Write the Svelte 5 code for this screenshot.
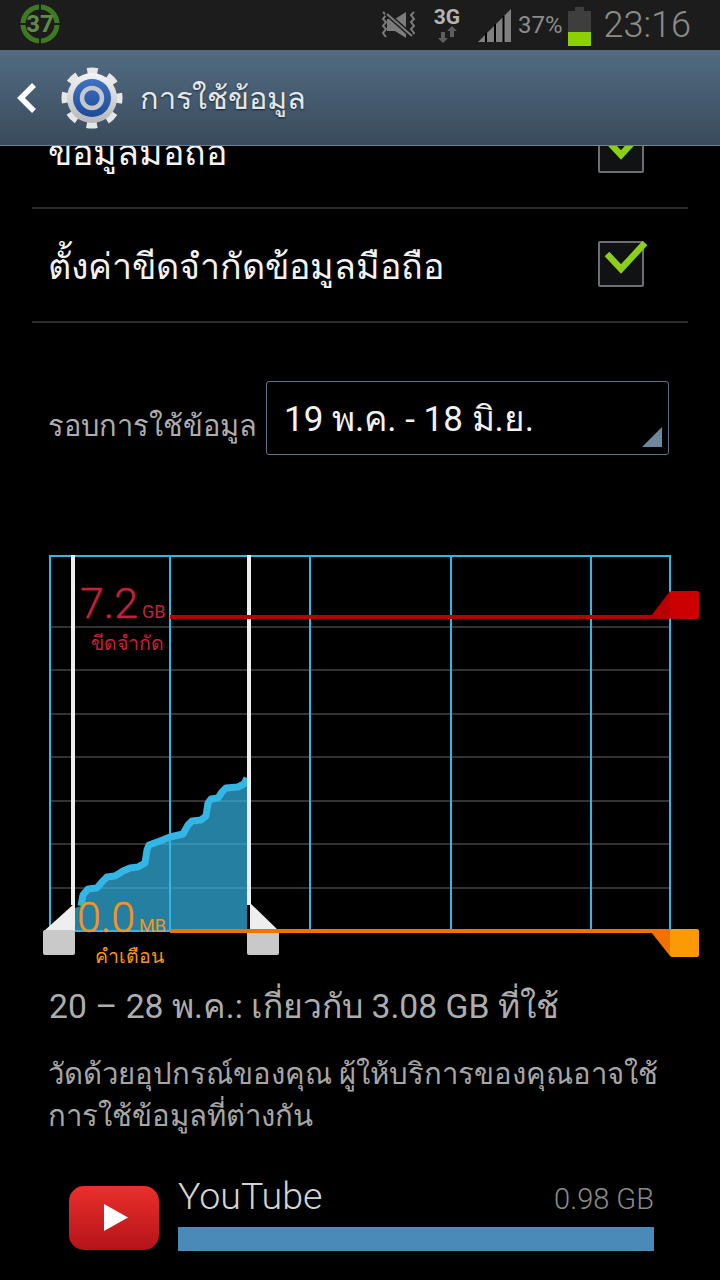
<script>
  const vLines = [50, 170, 310, 451, 591, 670];
  const hLines = [627, 670, 714, 757, 801, 844, 888];
  // usage curve, traced off the chart
  const curve = [[81,906],[83,895],[88,889],[97,888],[102,882],[107,877],[115,876],[123,871],[130,868],[138,867],[145,863],[147,850],[149,845],[160,841],[170,837],[183,834],[188,825],[192,821],[201,820],[206,816],[208,803],[211,799],[218,798],[222,792],[226,788],[238,787],[244,784],[247,778]];
  const line = curve.map((p) => p.join(',')).join(' ');
  const area = '75,931 75,908 ' + line + ' 247,931';
</script>

<div class="phone">
  <header class="status">
    <div class="badge">
      <svg width="40" height="40" viewBox="0 0 40 40">
        <circle cx="20" cy="20" r="17" fill="none" stroke="#3f7a22" stroke-width="5" />
        <path d="M20 0v6M20 34v6M0 20h6M34 20h6" stroke="#1c1c1c" stroke-width="2" />
      </svg>
      <span>37</span>
    </div>
    <div class="tray">
      <svg class="mute" width="38" height="28" viewBox="0 0 38 28">
        <path d="M7 8h8l11-7v26l-11-7H7z" fill="#7c7c7c" />
        <path d="M3 1l3 3-3 4 3 3-3 4 3 3-3 4 3 4M34 1l-3 3 3 4-3 3 3 4-3 3 3 4-3 4" fill="none" stroke="#7c7c7c" stroke-width="2" />
        <path d="M6 2l27 24" stroke="#1c1c1c" stroke-width="5" />
        <path d="M7 3l25 22" stroke="#7c7c7c" stroke-width="2" />
      </svg>
      <div class="net">
        <b>3G</b>
        <svg width="22" height="17" viewBox="0 0 22 17">
          <path d="M5 6h4v6h3l-5 5-5-5h3z" fill="#5e5e5e" />
          <path d="M14 11V5h-3l5-5 5 5h-3v6z" fill="#5e5e5e" />
        </svg>
      </div>
      <svg class="signal" width="33" height="33" viewBox="0 0 33 33">
        <path d="M0 33L33 0v33z" fill="#7f7f7f" />
        <path d="M8 33V24M17 33V15M25.500 33V7" stroke="#000" stroke-width="2" />
      </svg>
      <span class="pct">37%</span>
      <div class="battery"><i></i></div>
      <span class="clock">23:16</span>
    </div>
  </header>

  <nav class="bar">
    <svg class="back" width="22" height="32" viewBox="0 0 22 32">
      <path d="M18 3L5 16l13 13" fill="none" stroke="#fff" stroke-width="5.500" />
    </svg>
    <svg class="gear" width="62" height="62" viewBox="0 0 62 62">
      <defs>
        <linearGradient id="metal" x1="0" y1="0" x2="0" y2="1">
          <stop offset="0" stop-color="#f4f4f4" />
          <stop offset="1" stop-color="#b4b6ba" />
        </linearGradient>
        <linearGradient id="blue" x1="0" y1="0" x2="0" y2="1">
          <stop offset="0" stop-color="#3f72c4" />
          <stop offset="1" stop-color="#1c4a96" />
        </linearGradient>
      </defs>
      <circle cx="31" cy="31" r="27" fill="none" stroke="#e6e6e6" stroke-width="7" stroke-dasharray="10.600 10.600" stroke-dashoffset="5.300" />
      <circle cx="31" cy="31" r="25" fill="url(#metal)" />
      <circle cx="31" cy="31" r="19" fill="url(#blue)" />
      <circle cx="31" cy="31" r="10" fill="none" stroke="#c4c8ce" stroke-width="4.500" />
    </svg>
    <span class="title">การใช้ข้อมูล</span>
  </nav>

  <main class="list">
    <div class="row clipped">
      <span>ข้อมูลมือถือ</span>
      <div class="check">
        <svg width="50" height="40" viewBox="0 0 50 40"><path d="M7 15l14 15L45 4" fill="none" stroke="#8ccf1a" stroke-width="6.500" /></svg>
      </div>
    </div>
    <div class="row">
      <span>ตั้งค่าขีดจำกัดข้อมูลมือถือ</span>
      <div class="check">
        <svg width="50" height="40" viewBox="0 0 50 40"><path d="M7 15l14 15L45 4" fill="none" stroke="#8ccf1a" stroke-width="6.500" /></svg>
      </div>
    </div>

    <div class="cycle">
      <span class="cycle-label">รอบการใช้ข้อมูล</span>
      <div class="spinner">19 พ.ค. - 18 มิ.ย.<i></i></div>
    </div>

    <svg class="chart" width="720" height="430" viewBox="0 540 720 430">
      {#each hLines as y}
        <line x1="51" x2="670" y1={y} y2={y} stroke="#333" stroke-width="2" />
      {/each}
      <polygon points={area} fill="#33b5e5" fill-opacity="0.7" />
      {#each vLines as x}
        <line x1={x} x2={x} y1="555" y2="931" stroke="#33b5e5" stroke-width="2" />
      {/each}
      <line x1="49" x2="671" y1="556" y2="556" stroke="#33b5e5" stroke-width="2" />
      <polyline points={line} fill="none" stroke="#33b5e5" stroke-width="7" stroke-linejoin="round" />
      <line x1="75" x2="247" y1="931" y2="931" stroke="#33b5e5" stroke-width="2" />

      <rect x="71" y="555" width="4" height="350" fill="#eee" />
      <rect x="247" y="555" width="4" height="350" fill="#eee" />

      <polygon points="75,903 75,931 44,931" fill="#eee" />
      <rect x="43" y="930" width="32" height="25" rx="2" fill="#c9c9c9" />
      <polygon points="250,903 250,931 279,931" fill="#eee" />
      <rect x="247" y="930" width="32" height="25" rx="2" fill="#c9c9c9" />

      <rect x="170" y="615" width="500" height="4" fill="#b80000" />
      <polygon points="651,616 670,591 670,619 651,619" fill="#b80000" />
      <rect x="670" y="591" width="29" height="28" rx="2" fill="#cc0000" />

      <rect x="170" y="929" width="500" height="4" fill="#f27100" />
      <polygon points="651,932 670,956 670,929 651,929" fill="#f27100" />
      <rect x="670" y="929" width="29" height="28" rx="2" fill="#fb9a05" />

      <text class="num red" x="80" y="618">7.2</text>
      <text class="unit red" x="142" y="618">GB</text>
      <text class="tag red" x="164" y="650" text-anchor="end">ขีดจำกัด</text>
      <text class="num orange" x="77" y="932">0.0</text>
      <text class="unit orange" x="139" y="932">MB</text>
      <text class="tag orange" x="164" y="963" text-anchor="end">คำเตือน</text>
    </svg>

    <p class="summary">20 – 28 พ.ค.: เกี่ยวกับ 3.08 GB ที่ใช้</p>
    <p class="note">วัดด้วยอุปกรณ์ของคุณ ผู้ให้บริการของคุณอาจใช้<br />การใช้ข้อมูลที่ต่างกัน</p>

    <div class="app">
      <svg width="90" height="64" viewBox="0 0 90 64">
        <defs>
          <linearGradient id="yt" x1="0" y1="0" x2="0" y2="1">
            <stop offset="0" stop-color="#ea302b" />
            <stop offset="1" stop-color="#b5131a" />
          </linearGradient>
        </defs>
        <rect width="90" height="64" rx="15" fill="url(#yt)" />
        <path d="M35 18l24 13.500-24 13.500z" fill="#fff" />
      </svg>
      <div class="app-body">
        <div class="app-top"><span class="app-name">YouTube</span><span class="app-size">0.98 GB</span></div>
        <div class="app-bar"></div>
      </div>
    </div>
  </main>
</div>

<style>
  :global(body) { background: #000; }

  .phone {
    width: 720px;
    height: 1280px;
    overflow: hidden;
    display: flex;
    flex-direction: column;
    background: #000;
    font-family: Roboto, "Noto Sans", "DejaVu Sans", sans-serif;
  }

  /* status bar */
  .status {
    flex: none;
    height: 50px;
    background: #1c1c1c;
    display: flex;
    align-items: center;
    justify-content: space-between;
    padding: 0 29px 0 20px;
  }
  .badge {
    position: relative;
    width: 40px;
    height: 40px;
    margin-top: -2px;
  }
  .badge span {
    position: absolute;
    inset: 0;
    display: flex;
    align-items: center;
    justify-content: center;
    font-size: 24px;
    font-weight: 700;
    color: #5f8a48;
  }
  .tray { display: flex; align-items: center; color: #8c8c8c; }
  .mute { margin-right: 16px; }
  .net {
    display: flex;
    flex-direction: column;
    align-items: center;
    width: 26px;
    margin-right: 18px;
  }
  .net b { font-size: 21px; line-height: 18px; color: #b4b4b4; }
  .signal { margin-right: 7px; }
  .pct { font-size: 24px; margin-right: 5px; }
  .battery {
    position: relative;
    width: 23px;
    height: 35px;
    margin: 7px 13px 0 0;
    background: #3e3e3e;
  }
  .battery::before {
    content: '';
    position: absolute;
    top: -4px;
    left: 7px;
    width: 9px;
    height: 4px;
    background: #3e3e3e;
  }
  .battery i {
    position: absolute;
    left: 0;
    right: 0;
    bottom: 0;
    height: 14px;
    background: #8cd000;
  }
  .clock { font-size: 36px; font-weight: 300; }

  /* action bar */
  .bar {
    flex: none;
    height: 95px;
    background: linear-gradient(#526b82, #394b5c);
    border-bottom: 1px solid #6f8294;
    display: flex;
    align-items: center;
    padding-left: 16px;
    position: relative;
    z-index: 1;
  }
  .back { margin-right: 23px; }
  .gear { margin-right: 17px; }
  .title {
    font-size: 30.700px;
    color: #e4e8ec;
    text-shadow: 0 1px 2px rgba(0, 0, 0, 0.6);
    padding-top: 2px;
  }

  /* settings rows */
  .list { flex: 1; min-height: 0; }
  .row {
    height: 112px;
    margin: 0 32px;
    padding: 0 44px 0 16px;
    display: flex;
    align-items: center;
    justify-content: space-between;
    border-bottom: 2px solid #2c2c2c;
    font-size: 35.800px;
    color: #f2f2f2;
  }
  .row span { padding-top: 2px; }
  .row.clipped { margin-top: -51px; }
  .check {
    position: relative;
    width: 42px;
    height: 42px;
    margin-top: -2px;
    border: 2px solid #6c6f73;
    border-radius: 2px;
    background: #111214;
  }
  .check svg { position: absolute; left: 0; top: -4px; }

  .cycle {
    display: flex;
    align-items: center;
    gap: 9px;
    margin: 58px 51px 0 48px;
  }
  .cycle-label { font-size: 29px; color: #adadad; padding-top: 16px; }
  .spinner {
    position: relative;
    flex: 1;
    height: 72px;
    padding-left: 17px;
    border: 1px solid #5d7388;
    border-radius: 3px;
    display: flex;
    align-items: center;
    font-size: 35px;
    color: #f2f2f2;
  }
  .spinner i {
    position: absolute;
    right: 6px;
    bottom: 7px;
    width: 20px;
    height: 20px;
    background: #6e869e;
    clip-path: polygon(100% 0, 100% 100%, 0 100%);
  }

  /* chart */
  .chart { display: block; margin-top: 85px; }
  .num { font-size: 43px; font-weight: 300; }
  .unit { font-size: 18px; }
  .tag { font-size: 19.500px; }
  .red { fill: #c5213a; stroke: #c5213a; stroke-width: 0; }
  .orange { fill: #f7941d; stroke: #f7941d; stroke-width: 0; }
  .num.red, .num.orange { stroke-width: 0.4px; }

  .summary {
    margin: 15px 0 0 49px;
    font-size: 33.700px;
    line-height: 44px;
    color: #adadad;
  }
  .note {
    margin: 24px 0 0 48px;
    font-size: 29.300px;
    line-height: 42px;
    color: #a6a6a6;
  }

  .app {
    display: flex;
    gap: 19px;
    margin: 49px 66px 0 69px;
  }
  .app-body { flex: 1; }
  .app-top {
    display: flex;
    align-items: baseline;
    justify-content: space-between;
    height: 41px;
    line-height: 20px;
  }
  .app-name { font-size: 37.500px; font-weight: 300; color: #d4d4d4; }
  .app-size { font-size: 29px; font-weight: 300; color: #8a8a8a; }
  .app-bar { height: 24px; background: #4a8ab8; }
</style>
